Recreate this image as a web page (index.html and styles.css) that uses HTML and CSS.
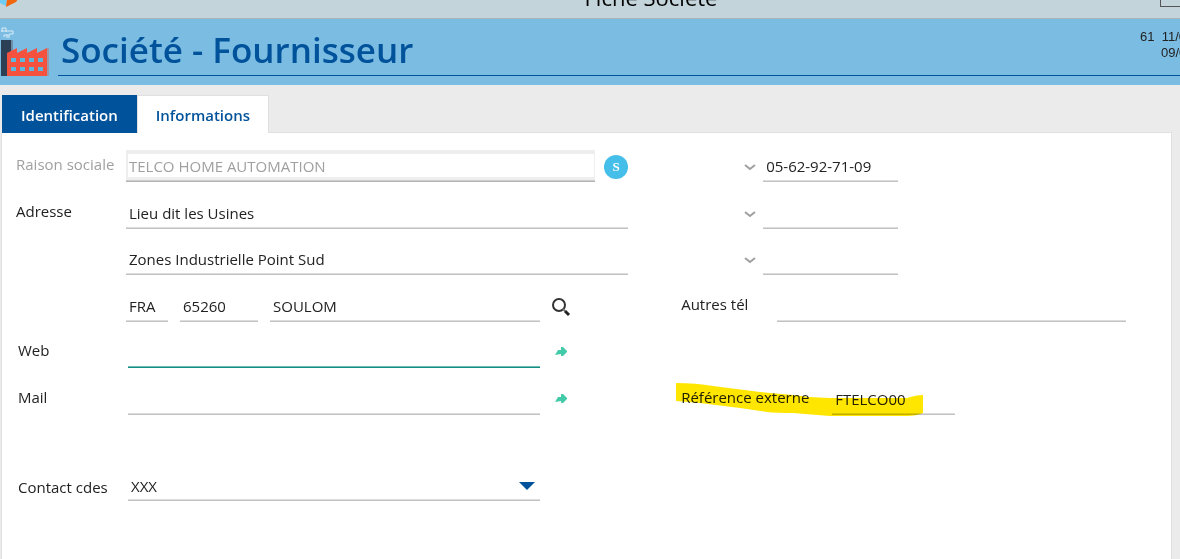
FILE: index.html
```html
<!DOCTYPE html>
<html lang="fr">

<head>
    <meta charset="UTF-8">
    <meta name="viewport" content="width=device-width, initial-scale=1.0">
    <title>Fiche Société</title>
    <link rel="stylesheet" href="styles.css">
</head>

<body>
    <div class="titlebar">
        <svg class="app-logo" width="20" height="8" viewBox="0 0 20 8">
            <path d="M0 0h7l-1 7L0 4z" fill="#6fcdf3" />
            <path d="M7 0h11l-2 3-10 5z" fill="#f2660f" />
        </svg>
        <span class="titlebar-text">Fiche Société</span>
        <button class="win-btn" aria-label="Agrandir"></button>
    </div>

    <header class="header">
        <svg class="factory" width="48" height="50" viewBox="0 0 48 50">
            <path d="M1 5V1h4v4M0 4h12v3H8M3 10V8h5v3M6 8v3" fill="none" stroke="#d9edf8" stroke-width="1" />
            <path d="M10 13h2v36h-2z" fill="#6f8fa8" />
            <path d="M0 13h10v36H0z" fill="#2b4055" />
            <path d="M6 26l10-5v5l10-5v5l10-5v5l10-5v28H6z" fill="#f4523f" />
            <path d="M46 21h2v28h-2z" fill="#9c98a8" />
            <path d="M10 31h5v4h-5zM19 31h5v4h-5zM28 31h5v4h-5zM37 31h5v4h-5zM10 40h5v4h-5zM19 40h5v4h-5zM28 40h5v4h-5zM37 40h5v4h-5z" fill="#59b9df" />
        </svg>
        <div class="header-main">
            <h1>Société - Fournisseur</h1>
            <div class="meta">
                <div>61&nbsp; 11/0</div>
                <div class="meta-second">09/0</div>
            </div>
        </div>
    </header>

    <nav class="tabs">
        <button class="tab active">Identification</button>
        <button class="tab">Informations</button>
    </nav>

    <main class="panel">
        <form class="form">
            <label class="muted" for="raison">Raison sociale</label>
            <div class="cell">
                <input class="field disabled" id="raison" type="text" value="TELCO HOME AUTOMATION" disabled>
                <div class="slot slot-small">
                    <button class="badge" type="button">S</button>
                </div>
            </div>
            <div class="cell phone">
                <button class="icon-btn" type="button" aria-label="Type de téléphone 1">
                    <svg width="12" height="8" viewBox="0 0 12 8"><path d="M1 2l5 4 5-4" fill="none" stroke="#a0a0a0" stroke-width="2" /></svg>
                </button>
                <input class="field" type="text" value="05-62-92-71-09" aria-label="Téléphone 1">
            </div>

            <label for="adresse">Adresse</label>
            <div class="cell">
                <input class="field" id="adresse" type="text" value="Lieu dit les Usines">
            </div>
            <div class="cell phone">
                <button class="icon-btn" type="button" aria-label="Type de téléphone 2">
                    <svg width="12" height="8" viewBox="0 0 12 8"><path d="M1 2l5 4 5-4" fill="none" stroke="#a0a0a0" stroke-width="2" /></svg>
                </button>
                <input class="field" type="text" aria-label="Téléphone 2">
            </div>

            <div class="cell start">
                <input class="field" type="text" value="Zones Industrielle Point Sud" aria-label="Adresse suite">
            </div>
            <div class="cell phone">
                <button class="icon-btn" type="button" aria-label="Type de téléphone 3">
                    <svg width="12" height="8" viewBox="0 0 12 8"><path d="M1 2l5 4 5-4" fill="none" stroke="#a0a0a0" stroke-width="2" /></svg>
                </button>
                <input class="field" type="text" aria-label="Téléphone 3">
            </div>

            <div class="cell start city">
                <input class="field pays" type="text" value="FRA" aria-label="Pays">
                <input class="field cp" type="text" value="65260" aria-label="Code postal">
                <input class="field" type="text" value="SOULOM" aria-label="Ville">
                <div class="slot">
                    <button class="icon-btn" type="button" aria-label="Rechercher">
                        <svg width="20" height="20" viewBox="0 0 20 20">
                            <circle cx="8" cy="8" r="6" fill="none" stroke="#333" stroke-width="2" />
                            <path d="M12 12l2 2" stroke="#777" stroke-width="2" />
                            <path d="M14 14l4 4" stroke="#222" stroke-width="3" />
                        </svg>
                    </button>
                </div>
            </div>
            <div class="cell">
                <label class="autres" for="autres">Autres tél</label>
                <input class="field" id="autres" type="text">
            </div>

            <label class="indent" for="web">Web</label>
            <div class="cell indent">
                <input class="field focus" id="web" type="text">
                <div class="slot">
                    <button class="icon-btn arrow" type="button" aria-label="Ouvrir le site">
                        <svg width="12" height="10" viewBox="0 0 12 10"><path d="M0 8l3-5h3V0h2l4 4v1L8 9H6V7z" fill="#43cba9" /></svg>
                    </button>
                </div>
            </div>

            <label class="indent" for="mail">Mail</label>
            <div class="cell indent">
                <input class="field" id="mail" type="text">
                <div class="slot">
                    <button class="icon-btn arrow" type="button" aria-label="Envoyer un mail">
                        <svg width="12" height="10" viewBox="0 0 12 10"><path d="M0 8l3-5h3V0h2l4 4v1L8 9H6V7z" fill="#43cba9" /></svg>
                    </button>
                </div>
            </div>
            <div class="cell">
                <label class="ref" for="reference">Référence externe</label>
                <input class="field ref-field" id="reference" type="text" value="FTELCO00">
                <svg class="marker" width="247" height="34" viewBox="0 0 247 34">
                    <path d="M0 0Q20 0 37 3L84 9L117 12Q135 15 154 15H231Q240 12 247 12V30Q240 33 231 33H154L117 30Q100 30 91 29L64 25L24 20L0 18z" fill="#ffe600" />
                </svg>
            </div>

            <label class="indent contact" for="contact">Contact cdes</label>
            <div class="cell indent">
                <div class="select-wrap">
                    <select class="field" id="contact">
                        <option>XXX</option>
                    </select>
                    <svg class="caret" width="16" height="8" viewBox="0 0 16 8"><path d="M0 0h16L8 8z" fill="#00529b" /></svg>
                </div>
                <div class="slot"></div>
            </div>
        </form>
    </main>
</body>

</html>
```
FILE: styles.css
```css
* {
    margin: 0;
    padding: 0;
    box-sizing: border-box;
}

html,
body {
    height: 100%;
}

body {
    display: flex;
    flex-direction: column;
    overflow: hidden;
    background-color: #ebebeb;
    color: #222;
    font-family: "Trebuchet MS", "Open Sans", sans-serif;
    font-size: 15px;
}

button,
input,
select {
    font: inherit;
    color: inherit;
    border: none;
    background: none;
}

/* title bar */
.titlebar {
    display: flex;
    justify-content: space-between;
    align-items: flex-end;
    height: 19px;
    flex-shrink: 0;
    padding-bottom: 11px;
    background-color: #c3d5db;
    border-bottom: 1px solid #aab4bb;
}

.titlebar-text {
    margin-left: 122px;
    font-family: "Open Sans", sans-serif;
    font-size: 22px;
    line-height: 20px;
    color: #000;
}

.win-btn {
    width: 20px;
    height: 20px;
    border: 1px solid #555;
    border-right: none;
}

/* header */
.header {
    display: flex;
    flex-shrink: 0;
    height: 66px;
    padding: 8px 0 9px 1px;
    background-color: #7abce2;
}

.header-main {
    display: flex;
    flex: 1;
    justify-content: space-between;
    margin-left: 9px;
    padding-left: 3px;
    border-bottom: 1px solid #00529b;
    min-width: 0;
}

h1 {
    font-size: 35px;
    line-height: 46px;
    font-weight: 600;
    color: #00529b;
    white-space: nowrap;
}

.meta {
    width: 40px;
    padding-top: 2px;
    overflow: hidden;
    white-space: nowrap;
    font-family: "Liberation Sans", Arial, sans-serif;
    font-size: 13px;
    line-height: 16px;
}

.meta-second {
    padding-left: 21px;
}

/* tabs */
.tabs {
    display: flex;
    flex-shrink: 0;
    margin: 10px 0 0 2px;
}

.tab {
    height: 38px;
    padding: 0 18px;
    background-color: #fff;
    border: 1px solid #e0e0e0;
    border-bottom: none;
    color: #00529b;
    font-weight: 600;
    cursor: pointer;
    position: relative;
}

.tab.active {
    background-color: #00529b;
    border-color: #00529b;
    color: #fff;
}

/* panel */
.panel {
    flex: 1;
    margin: -1px 8px 0 1px;
    padding: 17px 0 0 14px;
    background-color: #fff;
    border: 1px solid #e0e0e0;
    border-bottom: none;
}

.form {
    display: grid;
    grid-template-columns: 110px 17fr 15fr;
    grid-template-rows: 32px 47px 46px 47px 46px 47px 86px;
    align-items: end;
}

label {
    grid-column: 1;
    padding-bottom: 4px;
    line-height: 28px;
    white-space: nowrap;
}

.muted {
    color: #a0a0a0;
}

.cell {
    display: flex;
    align-items: flex-end;
    position: relative;
    padding-right: 45px;
}

label + .cell,
.start {
    grid-column: 2;
    padding-right: 53px;
}

.indent {
    padding-left: 2px;
}

.contact {
    padding-bottom: 0;
}

.field {
    flex: 1;
    min-width: 0;
    width: 100%;
    height: 30px;
    padding: 0 3px 2px;
    border-bottom: 1px solid #c2c2c2;
    box-shadow: inset 0 -1px #ddd;
    outline: none;
}

.field.focus {
    border-bottom-color: #128f83;
    box-shadow: inset 0 -1px #6fbab2;
}

.field.disabled {
    height: 32px;
    padding: 0 3px;
    color: #a0a0a0;
    border-bottom-color: #b4b4b4;
    box-shadow: inset 0 -1px #ccc, inset 0 4px #eee, inset -1px -4px #eee, inset 2px 0 #eee;
}

.slot {
    display: flex;
    align-items: center;
    width: 88px;
    height: 30px;
    padding-left: 11px;
}

.slot-small {
    width: 33px;
    padding-left: 9px;
}

.badge {
    width: 24px;
    height: 24px;
    border-radius: 50%;
    background-color: #45bfea;
    color: #fff;
    font-family: "Liberation Serif", serif;
    font-size: 13px;
    font-weight: 700;
    line-height: 24px;
}

.icon-btn {
    display: flex;
    cursor: pointer;
}

.arrow {
    padding: 0 0 2px 4px;
}

.phone {
    align-items: center;
    gap: 7px;
    padding-left: 63px;
}

.phone .field {
    flex: none;
    width: 135px;
}

.city {
    gap: 12px;
}

.city .slot {
    margin-left: -12px;
}

.city .pays {
    flex: none;
    width: 42px;
}

.city .cp {
    flex: none;
    width: 78px;
}

.autres {
    width: 96px;
}

.ref {
    width: 151px;
}

.field.ref-field {
    flex: none;
    width: 123px;
}

/* highlighter stroke over the reference */
.marker {
    position: absolute;
    left: -5px;
    bottom: -2px;
    mix-blend-mode: multiply;
    pointer-events: none;
}

.select-wrap {
    display: flex;
    flex: 1;
    position: relative;
}

.select-wrap .field {
    appearance: none;
    padding-bottom: 0;
}

.caret {
    position: absolute;
    right: 5px;
    top: 11px;
    pointer-events: none;
}
```
